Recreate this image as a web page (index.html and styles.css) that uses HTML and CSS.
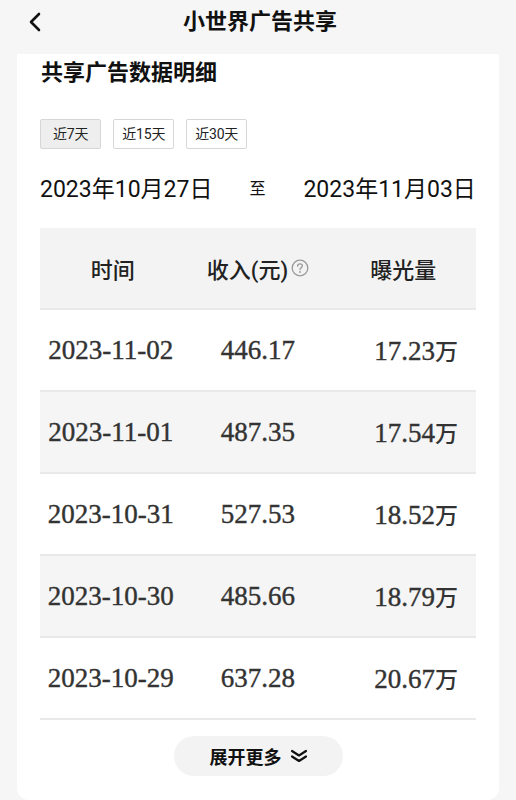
FILE: index.html
```html
<!DOCTYPE html>
<html lang="zh">
<head>
<meta charset="utf-8">
<link rel="stylesheet" href="styles.css">
</head>
<body>
<div class="topbar">
  <svg class="back" viewBox="0 0 14 20" width="14" height="20"><path d="M11 2 L3 10 L11 18" fill="none" stroke="#111" stroke-width="2.6" stroke-linecap="round" stroke-linejoin="round"/></svg>
  <div class="title">小世界广告共享</div>
</div>
<div class="card">
  <div class="card-title">共享广告数据明细</div>
  <div class="tabs">
    <div class="tab active">近7天</div>
    <div class="tab">近15天</div>
    <div class="tab">近30天</div>
  </div>
  <div class="range">
    <span class="date">2023年10月27日</span>
    <span class="to">至</span>
    <span class="date">2023年11月03日</span>
  </div>
  <div class="table">
    <div class="thead">
      <div class="th">时间</div>
      <div class="th">收入(元)<svg class="q" viewBox="0 0 18 18" width="18" height="18"><circle cx="9" cy="9" r="7.8" fill="none" stroke="#9a9a9a" stroke-width="1.3"/><path d="M6.6 7.2 C6.6 5.7 7.7 4.9 9 4.9 C10.3 4.9 11.4 5.7 11.4 7 C11.4 8.6 9 8.7 9 10.6" fill="none" stroke="#9a9a9a" stroke-width="1.3" stroke-linecap="round"/><circle cx="9" cy="13" r="0.9" fill="#9a9a9a"/></svg></div>
      <div class="th">曝光量</div>
    </div>
    <div class="tr"><div class="td c1">2023-11-02</div><div class="td c2">446.17</div><div class="td c3">17.23<span class="wan">万</span></div></div>
    <div class="tr alt"><div class="td c1">2023-11-01</div><div class="td c2">487.35</div><div class="td c3">17.54<span class="wan">万</span></div></div>
    <div class="tr"><div class="td c1">2023-10-31</div><div class="td c2">527.53</div><div class="td c3">18.52<span class="wan">万</span></div></div>
    <div class="tr alt"><div class="td c1">2023-10-30</div><div class="td c2">485.66</div><div class="td c3">18.79<span class="wan">万</span></div></div>
    <div class="tr last"><div class="td c1">2023-10-29</div><div class="td c2">637.28</div><div class="td c3">20.67<span class="wan">万</span></div></div>
  </div>
  <div class="more-wrap">
    <div class="more">展开更多<svg class="dchev" viewBox="0 0 18 14" width="18" height="14"><path d="M2 2 L9 6.5 L16 2 M2 7.5 L9 12 L16 7.5" fill="none" stroke="#111" stroke-width="2.2" stroke-linecap="round" stroke-linejoin="round"/></svg></div>
  </div>
</div>
</body>
</html>
```
FILE: styles.css
```css
html, body {
  margin: 0;
  padding: 0;
  background: #f6f6f6;
  font-family: Roboto, "Noto Sans CJK SC", sans-serif;
  color: #111;
}
.topbar {
  height: 54px;
  position: relative;
  display: flex;
  align-items: flex-start;
  justify-content: center;
}
.back {
  position: absolute;
  left: 28px;
  top: 12px;
}
.title {
  font-size: 22px;
  font-weight: 700;
  line-height: 30px;
  margin-top: 7px;
  margin-left: 4px;
}
.card {
  background: #fff;
  margin: 0 17px;
  padding: 4px 23px 24px;
  border-radius: 0 0 12px 12px;
  min-height: 715px;
  box-sizing: border-box;
}
.card-title {
  font-size: 22px;
  font-weight: 700;
  line-height: 30px;
  padding-left: 1px;
}
.tabs {
  display: flex;
  gap: 12px;
  margin-top: 31px;
}
.tab {
  height: 30px;
  box-sizing: border-box;
  border: 1px solid #d6d6d6;
  border-radius: 2px;
  font-size: 14px;
  line-height: 28px;
  padding: 0 8px;
  color: #222;
  background: #fff;
  letter-spacing: -0.2px;
}
.tab.active {
  background: #eeeeee;
  padding: 0 12px;
}
.range {
  display: flex;
  align-items: center;
  margin-top: 23px;
  height: 30px;
}
.date {
  font-size: 23px;
  color: #111;
}
.to {
  font-size: 16px;
  margin-left: 37px;
  margin-right: 38px;
}
.table {
  margin-top: 26px;
  border-bottom: 2px solid #e9e9e9;
}
.thead {
  display: grid;
  grid-template-columns: 1fr 1fr 1fr;
  height: 80px;
  background: #f3f3f3;
  align-items: center;
}
.th {
  text-align: center;
  font-size: 22px;
  font-weight: 500;
  color: #222;
  display: flex;
  align-items: center;
  justify-content: center;
}
.q {
  margin-left: 3px;
}
.tr {
  display: grid;
  grid-template-columns: 1fr 1fr 1fr;
  height: 82px;
  box-sizing: border-box;
  border-top: 2px solid #e9e9e9;
  align-items: center;
  font-family: "Liberation Serif", "Noto Sans CJK SC", serif;
  font-size: 27px;
  color: #333;
  -webkit-text-stroke: 0.4px #333;
}
.tr.alt {
  background: #f5f5f5;
}
.c1 {
  text-align: center;
  padding-right: 4px;
}
.c2 {
  text-align: center;
}
.c3 {
  text-align: right;
  padding-right: 18px;
}
.wan {
  font-size: 23px;
  -webkit-text-stroke: 0;
  font-weight: 500;
}
.more-wrap {
  display: flex;
  justify-content: center;
  margin-top: 16px;
}
.more {
  width: 169px;
  height: 40px;
  border-radius: 20px;
  background: #f3f3f3;
  display: flex;
  align-items: center;
  justify-content: center;
  font-size: 18px;
  font-weight: 700;
  gap: 8px;
  margin-left: 1px;
}
```
